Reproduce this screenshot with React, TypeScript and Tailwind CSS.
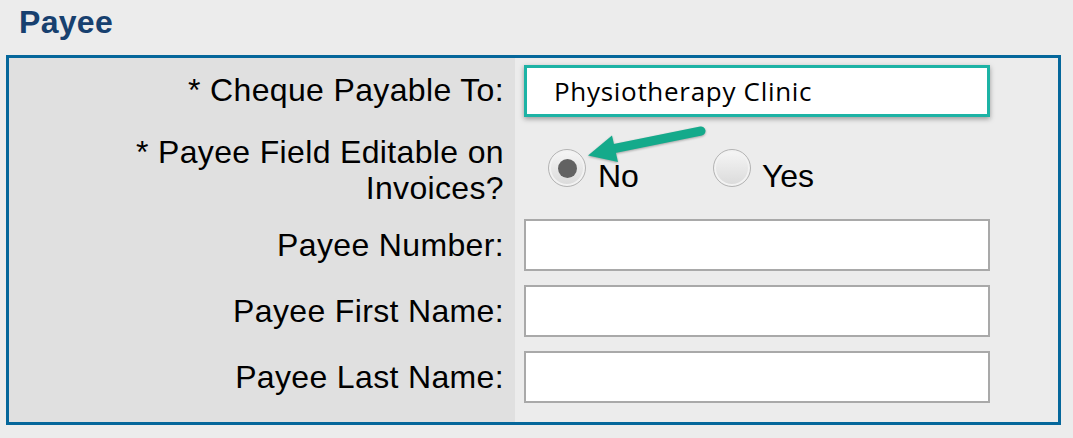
import React from "react";

const labelCls = "font-['Liberation_Sans',Arial,sans-serif] text-[32px] leading-[36px] tracking-[0.35px] text-black text-right";

function Radio({ checked }: { checked?: boolean }) {
  return (
    <span className="flex h-[38px] w-[38px] shrink-0 items-center justify-center rounded-full border border-[#b4b4b4] bg-[linear-gradient(180deg,#f6f6f6,#dadada)] shadow-[inset_0_0_0_2px_#f2f2f2]">
      {checked && <span className="h-[19px] w-[19px] rounded-full bg-[#626262]" />}
    </span>
  );
}

function TextBox() {
  return <div className="h-[52px] w-[466px] border-2 border-[#a9a9a9] bg-white" />;
}

export default function App() {
  const plainRows = ["Payee Number:", "Payee First Name:", "Payee Last Name:"];

  return (
    <div className="relative h-[438px] w-[1073px] overflow-hidden bg-[#ececec] font-['Liberation_Sans',Arial,sans-serif]">
      {/* heading */}
      <div className="h-[55px] pl-[19px] pt-[4px]">
        <h2 className="text-[32px] font-bold leading-[36px] tracking-[0.3px] text-[#17406f]">Payee</h2>
      </div>

      {/* form frame */}
      <div className="ml-[6px] flex h-[370px] w-[1055px] border-[3px] border-[#05679b]">
        {/* label column */}
        <div className="flex w-[506px] flex-col bg-[#e0e0e0] pr-[11px]">
          <div className={`h-[72px] pt-[14px] ${labelCls}`}>* Cheque Payable To:</div>
          <div className={`h-[82px] pt-[4px] ${labelCls} leading-[35px]`}>
            * Payee Field Editable on
            <br />
            Invoices?
          </div>
          {plainRows.map((l) => (
            <div key={l} className={`flex h-[66px] items-center justify-end ${labelCls}`}>
              {l}
            </div>
          ))}
        </div>

        {/* input column */}
        <div className="flex flex-1 flex-col pl-[9px]">
          <div className="h-[72px] pt-[7px]">
            <div className="flex h-[52px] w-[466px] items-center border-[3px] border-[#1db3a5] bg-white pl-[27px] shadow-[0_2px_5px_rgba(0,0,0,0.35)]">
              <span className="font-['Open_Sans',sans-serif] text-[26px] leading-none tracking-[0.7px] text-black">
                Physiotherapy Clinic
              </span>
            </div>
          </div>
          <div className="flex h-[82px] items-start pl-[24px] pt-[19px]">
            <div className="flex items-end gap-[12px]">
              <Radio checked />
              <span className="text-[32px] leading-[21px] text-black">No</span>
            </div>
            <div className="ml-[74px] flex items-end gap-[11px]">
              <Radio />
              <span className="text-[32px] leading-[21px] text-black">Yes</span>
            </div>
          </div>
          {plainRows.map((l) => (
            <div key={l} className="h-[66px] pt-[7px]">
              <TextBox />
            </div>
          ))}
        </div>
      </div>

      {/* annotation arrow */}
      <svg
        className="pointer-events-none absolute left-[580px] top-[120px] drop-shadow-[0_1px_1px_rgba(0,0,0,0.3)]"
        width="130"
        height="50"
        viewBox="0 0 130 50"
      >
        <line x1="32" y1="29" x2="121" y2="11" stroke="#14aa8b" strokeWidth="9" strokeLinecap="round" />
        <polygon points="8,35.5 32,15.5 38,42" fill="#14aa8b" />
      </svg>
    </div>
  );
}
